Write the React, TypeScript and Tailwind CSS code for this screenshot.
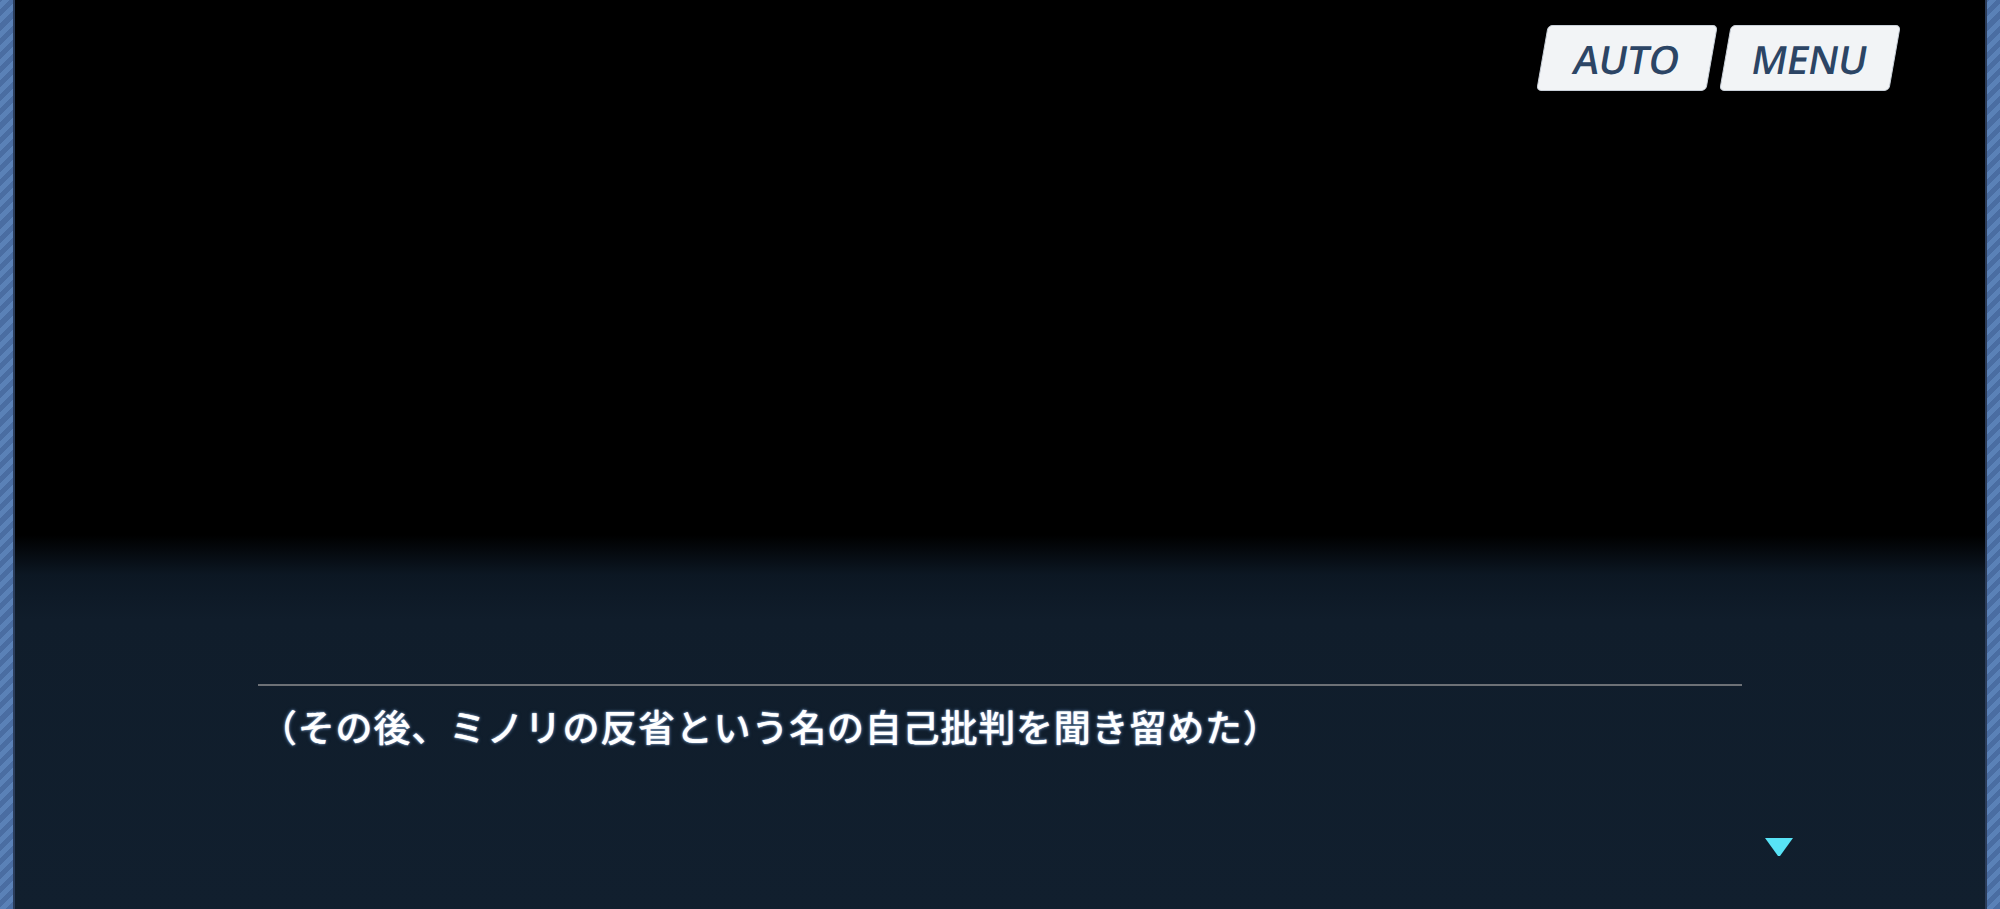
import React from 'react';

const stripe =
  'bg-[repeating-linear-gradient(-45deg,#4a6da2_0px,#4a6da2_5px,#5a81b7_5px,#5a81b7_10px)]';

const SideStripe: React.FC<{ side: 'left' | 'right' }> = ({ side }) => (
  <div
    className={
      side === 'left'
        ? `w-[15px] shrink-0 ${stripe} border-r-2 border-[#2a3c5a]`
        : `w-[15px] shrink-0 ${stripe} border-l-2 border-[#2a3c5a]`
    }
  />
);

const SkewButton: React.FC<{ label: string }> = ({ label }) => (
  <button
    type="button"
    className="flex h-[66px] w-[170px] -skew-x-[10deg] items-center justify-center rounded-[5px] border border-[#c9d0d8] bg-[#f2f4f6] shadow-[0_2px_6px_rgba(0,0,0,0.7)]"
  >
    <span className="font-['Open_Sans','Liberation_Sans',sans-serif] text-[39px] font-semibold leading-none tracking-[-0.5px] text-[#2c4565]">
      {label}
    </span>
  </button>
);

export default function App() {
  return (
    <div className="flex h-[909px] w-full overflow-hidden bg-black">
      <SideStripe side="left" />

      <main className="relative flex flex-1 flex-col bg-[linear-gradient(to_bottom,#000_0px,#000_535px,#0c1723_575px,#101d2b_620px,#111f2e_100%)]">
        <header className="flex justify-end gap-[13px] pr-[90px] pt-[25px]">
          <SkewButton label="AUTO" />
          <SkewButton label="MENU" />
        </header>

        <div className="flex-1" />

        {/* dialogue box */}
        <section className="mx-auto h-[225px] w-[1484px]">
          <div className="h-[2px] bg-[#6d7176]" />
          <p className="mt-[13px] pl-[2px] font-['Noto_Sans_CJK_JP',sans-serif] text-[37px] font-medium leading-[54px] tracking-[0.8px] text-white [text-shadow:0_0_1px_#c8daf0,0_0_3px_#7d9cc0,0_0_4px_#2c4664]">
            （その後、ミノリの反省という名の自己批判を聞き留めた）
          </p>
        </section>

        {/* next-page indicator */}
        <svg
          className="absolute bottom-[53px] right-[192px]"
          width="28"
          height="18"
          viewBox="0 0 28 18"
        >
          <path d="M0 0 H28 L15 18 H13 Z" fill="#58e3f6" />
        </svg>
      </main>

      <SideStripe side="right" />
    </div>
  );
}
